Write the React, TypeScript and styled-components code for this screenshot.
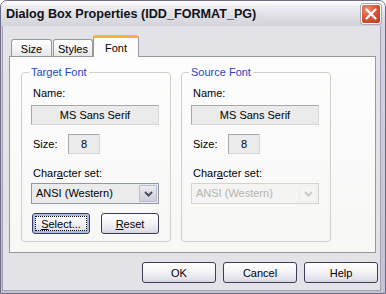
import styled, { createGlobalStyle } from "styled-components";

const GlobalStyle = createGlobalStyle`
  html, body {
    margin: 0;
    padding: 0;
    background: #ffffff;
  }
  body {
    font-family: "Liberation Sans", Arial, sans-serif;
    font-size: 11px;
    color: #000;
  }
`;

const Window = styled.div`
  box-sizing: border-box;
  width: 386px;
  height: 294px;
  display: flex;
  flex-direction: column;
  border: 1px solid #6c6c86;
  border-radius: 7px 7px 0 0;
  background: linear-gradient(to bottom, #d6d6e0, #c2c2d0);
  overflow: hidden;
`;

const TitleBar = styled.div`
  flex: none;
  height: 25px;
  display: flex;
  align-items: center;
  justify-content: space-between;
  padding: 1px 4px 0 5px;
  box-sizing: border-box;
  background: linear-gradient(to bottom, #ffffff 0%, #ececf0 25%, #dedee4 60%, #d3d3db 100%);
`;

const Title = styled.span`
  font-weight: bold;
  font-size: 12.6px;
  color: #111118;
  white-space: nowrap;
`;

const CloseButton = styled.div`
  width: 20px;
  height: 20px;
  box-sizing: border-box;
  border: 1px solid #ffffff;
  border-radius: 3px;
  box-shadow: 0 0 0 1px #a8a8b8;
  background: radial-gradient(circle at 30% 25%, #ec8e72 0%, #d9573a 45%, #b8361b 100%);
  display: flex;
  align-items: center;
  justify-content: center;
`;

const Client = styled.div`
  flex: 1;
  display: flex;
  flex-direction: column;
  margin: 0 4px 2px 1px;
  padding: 9px 4px 0 6px;
  border: 1px solid #a0a0b4;
  border-top: none;
  background: #e3e2e6;
`;

const TabRow = styled.div`
  display: flex;
  align-items: flex-end;
  height: 21px;
  padding-left: 2px;
`;

const Tab = styled.div<{ $width: number; $active?: boolean; $gap?: number }>`
  box-sizing: border-box;
  width: ${(p) => p.$width}px;
  height: ${(p) => (p.$active ? 22 : 17)}px;
  margin-right: ${(p) => p.$gap ?? 0}px;
  margin-bottom: ${(p) => (p.$active ? -1 : 0)}px;
  position: relative;
  z-index: ${(p) => (p.$active ? 1 : 0)};
  display: flex;
  align-items: ${(p) => (p.$active ? "flex-start" : "center")};
  justify-content: center;
  padding-top: ${(p) => (p.$active ? 4 : 1)}px;
  border: 1px solid #919b9c;
  border-bottom: none;
  border-radius: 3px 3px 0 0;
  border-top: ${(p) => (p.$active ? "3px solid #f4b13c" : "1px solid #919b9c")};
  background: ${(p) =>
    p.$active
      ? "#fcfcfc"
      : "linear-gradient(to bottom, #ffffff, #f3f3f3 60%, #e6e6e6)"};
`;

const Panel = styled.div`
  box-sizing: border-box;
  height: 197px;
  display: flex;
  gap: 10px;
  padding: 9px 0 0 11px;
  border: 1px solid #919b9c;
  background: linear-gradient(to bottom, #fdfdfd, #f7f7f6);
`;

const Group = styled.fieldset`
  box-sizing: border-box;
  width: 150px;
  height: 176px;
  margin: 0;
  padding: 8px 9px 6px 9px;
  min-width: 0;
  border: 1px solid #d0d0c8;
  border-radius: 4px;
  display: flex;
  flex-direction: column;
  align-self: flex-start;
`;

const Legend = styled.legend`
  padding: 0 2px;
  margin-left: -2px;
  line-height: 13px;
  color: #1c46c8;
`;

const Label = styled.div<{ $top?: number }>`
  line-height: 13px;
  padding-left: 2px;
  margin-top: ${(p) => p.$top ?? 0}px;
`;

const ReadField = styled.div<{ $width: number }>`
  box-sizing: border-box;
  width: ${(p) => p.$width}px;
  height: 20px;
  line-height: 18px;
  text-align: center;
  background: #ebebeb;
  border: 1px solid;
  border-color: #a8a8a8 #d6d6d6 #d6d6d6 #a8a8a8;
`;

const NameField = styled(ReadField)`
  margin-top: 5px;
`;

const SizeRow = styled.div`
  display: flex;
  align-items: center;
  margin-top: 9px;
  padding-left: 2px;
`;

const SizeLabel = styled.span`
  width: 35px;
`;

const Combo = styled.div<{ $disabled?: boolean }>`
  box-sizing: border-box;
  width: 128px;
  height: 21px;
  margin-top: 3px;
  display: flex;
  align-items: stretch;
  border: 1px solid ${(p) => (p.$disabled ? "#d4d4cc" : "#8e98a6")};
  background: ${(p) => (p.$disabled ? "#f4f4f2" : "#ebebeb")};
  color: ${(p) => (p.$disabled ? "#b4b3aa" : "#000")};
`;

const ComboText = styled.span`
  flex: 1;
  padding-left: 4px;
  line-height: 19px;
`;

const ComboArrow = styled.span<{ $disabled?: boolean }>`
  width: 16px;
  margin: 1px;
  display: flex;
  align-items: center;
  justify-content: center;
  border-radius: 1px;
  background: ${(p) =>
    p.$disabled ? "#f4f4f2" : "linear-gradient(to bottom, #ebebf0, #cdcdd6)"};
  border: 1px solid ${(p) => (p.$disabled ? "#ececea" : "#bdbdcb")};
  color: ${(p) => (p.$disabled ? "#cbcbc4" : "#4a4a60")};
`;

const GroupButtons = styled.div`
  display: flex;
  gap: 11px;
  margin-top: 9px;
  margin-left: 1px;
`;

const Button = styled.div<{ $width: number; $focused?: boolean }>`
  box-sizing: border-box;
  width: ${(p) => p.$width}px;
  height: 21px;
  padding: 2px;
  border: 1px solid #3c3c58;
  border-radius: 3px;
  background: linear-gradient(to bottom, #ffffff 0%, #f4f4f7 45%, #e2e2ea 85%, #d4d4de 100%);
  box-shadow: ${(p) => (p.$focused ? "inset 0 0 0 2px #a7bde8" : "none")};
  display: flex;
`;

const ButtonFace = styled.span<{ $focused?: boolean }>`
  flex: 1;
  display: flex;
  align-items: center;
  justify-content: center;
  outline: ${(p) => (p.$focused ? "1px dotted #000" : "none")};
  outline-offset: -1px;
`;

const Footer = styled.div`
  display: flex;
  justify-content: flex-end;
  gap: 7px;
  margin-top: 9px;
  margin-right: -2px;
`;

const Chevron = () => (
  <svg width="9" height="6" viewBox="0 0 9 6">
    <path d="M1 1 L4.5 4.5 L8 1" stroke="currentColor" strokeWidth="2" fill="none" />
  </svg>
);

const CloseIcon = () => (
  <svg width="12" height="12" viewBox="0 0 12 12">
    <path d="M1.5 1.5 L10.5 10.5 M10.5 1.5 L1.5 10.5" stroke="#ffffff" strokeWidth="2.2" strokeLinecap="round" />
  </svg>
);

const FontGroup = ({ title, disabled }: { title: string; disabled?: boolean }) => (
  <Group>
    <Legend>{title}</Legend>
    <Label>Name:</Label>
    <NameField $width={128}>MS Sans Serif</NameField>
    <SizeRow>
      <SizeLabel>Size:</SizeLabel>
      <ReadField $width={32}>8</ReadField>
    </SizeRow>
    <Label $top={13}>
      Char<u>a</u>cter set:
    </Label>
    <Combo $disabled={disabled}>
      <ComboText>ANSI (Western)</ComboText>
      <ComboArrow $disabled={disabled}>
        <Chevron />
      </ComboArrow>
    </Combo>
    {!disabled && (
      <GroupButtons>
        <Button $width={58} $focused>
          <ButtonFace $focused>
            <u>S</u>elect...
          </ButtonFace>
        </Button>
        <Button $width={58}>
          <ButtonFace>
            <u>R</u>eset
          </ButtonFace>
        </Button>
      </GroupButtons>
    )}
  </Group>
);

export default function App() {
  return (
    <>
      <GlobalStyle />
      <Window>
        <TitleBar>
          <Title>Dialog Box Properties (IDD_FORMAT_PG)</Title>
          <CloseButton>
            <CloseIcon />
          </CloseButton>
        </TitleBar>
        <Client>
          <TabRow>
            <Tab $width={41} $gap={1}>Size</Tab>
            <Tab $width={40}>Styles</Tab>
            <Tab $width={46} $active>Font</Tab>
          </TabRow>
          <Panel>
            <FontGroup title="Target Font" />
            <FontGroup title="Source Font" disabled />
          </Panel>
          <Footer>
            <Button $width={74}>
              <ButtonFace>OK</ButtonFace>
            </Button>
            <Button $width={74}>
              <ButtonFace>Cancel</ButtonFace>
            </Button>
            <Button $width={74}>
              <ButtonFace>Help</ButtonFace>
            </Button>
          </Footer>
        </Client>
      </Window>
    </>
  );
}
